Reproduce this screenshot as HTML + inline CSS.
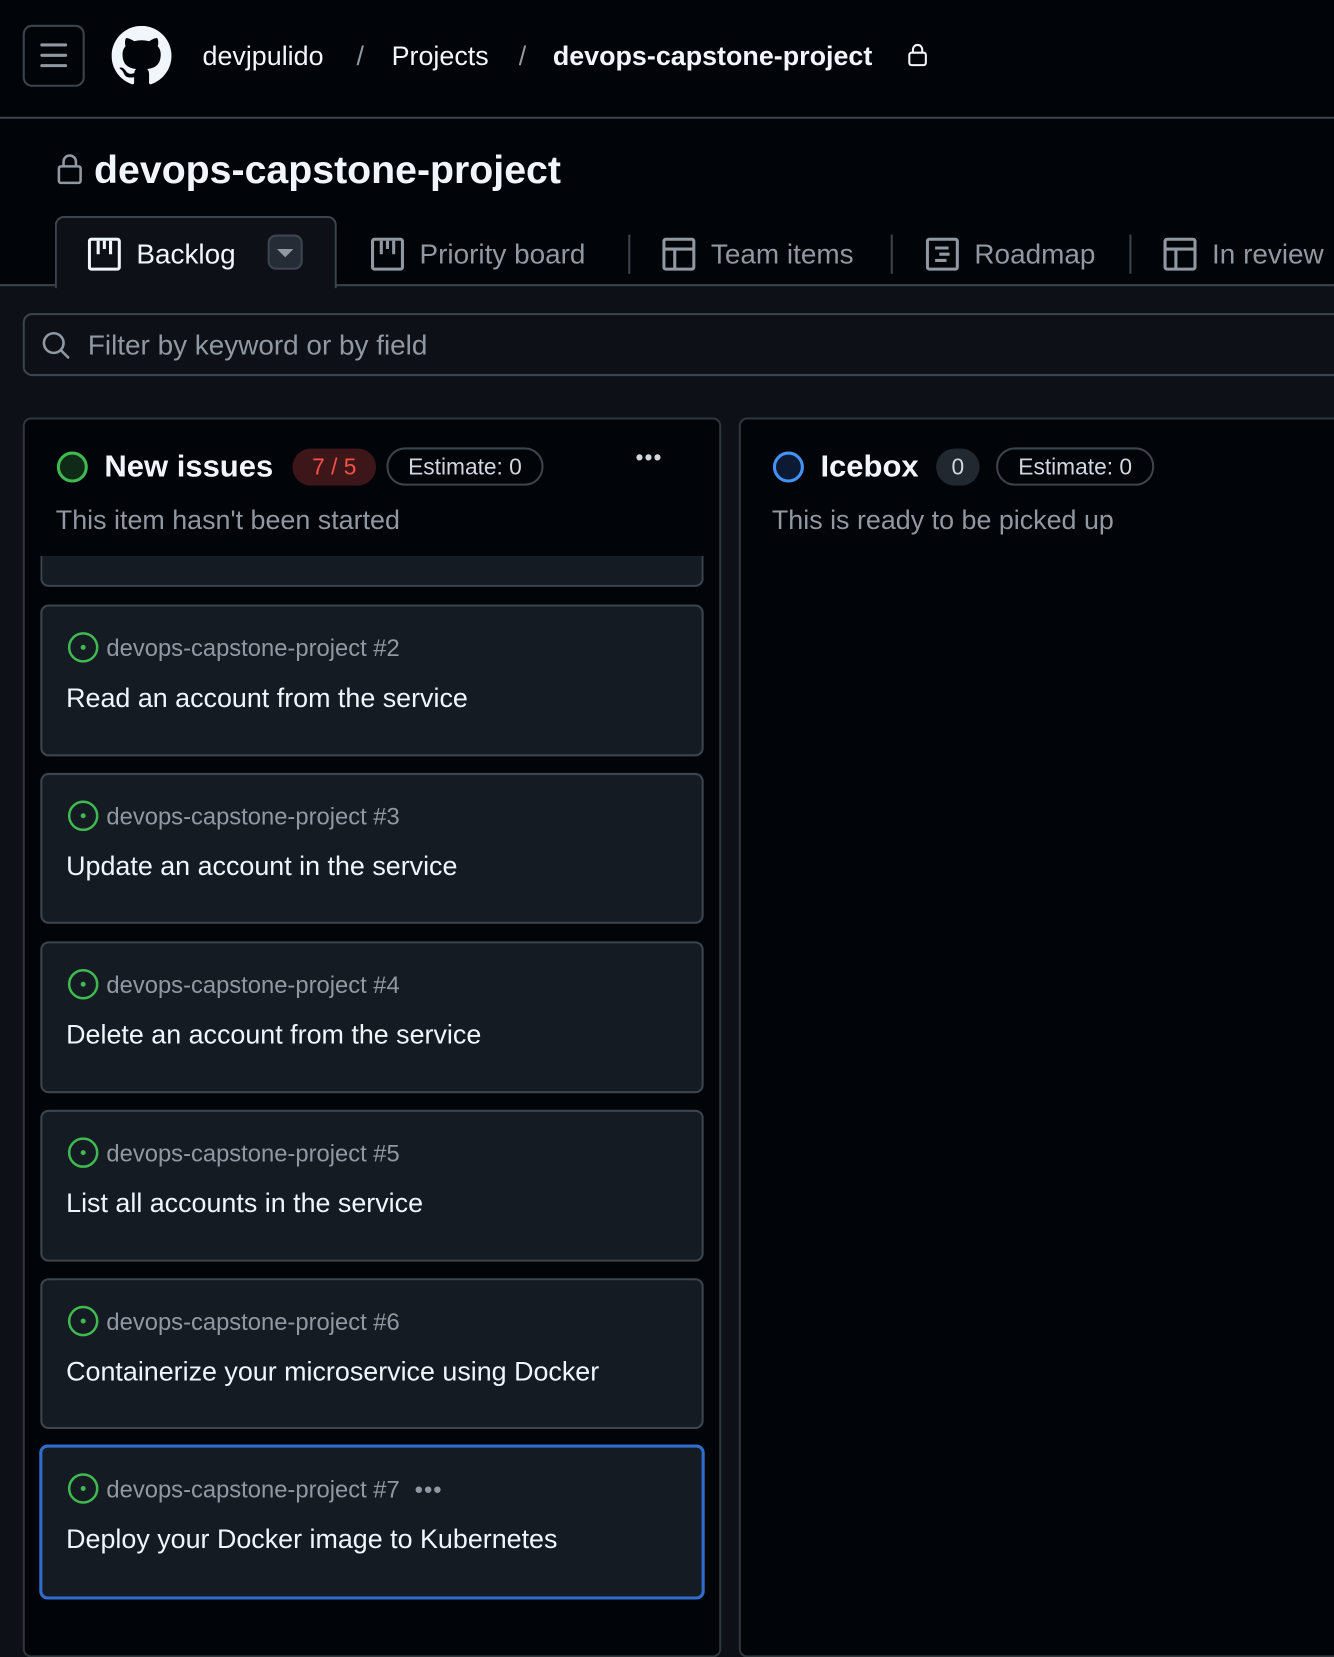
<!DOCTYPE html>
<html><head><meta charset="utf-8"><style>
html,body{margin:0;padding:0;width:1334px;height:1620px;overflow:hidden;background:#0d1117;}
#w{position:absolute;left:0;top:0;width:1291px;height:1568px;transform:scale(1.0333);transform-origin:0 0;font-family:"Liberation Sans",Arial,sans-serif;color:#f0f6fc;}
.a{position:absolute;}
.hdr{left:0;top:0;width:1291px;height:115px;background:#010409;border-bottom:2px solid #3d444d;box-sizing:border-box;}
.top2{left:0;top:115px;width:1291px;height:162px;background:#010409;border-bottom:2px solid #3d444d;box-sizing:border-box;}
.crumb{top:38px;font-size:26px;line-height:32px;color:#f0f6fc;}
.sep{color:#9198a1;}
.tab{top:230px;font-size:27px;line-height:32px;color:#9198a1;}
.vsep{top:227px;width:2px;height:38px;background:#3d444d;}
.col{top:404px;background:#010409;border:2px solid #30363d;border-radius:8px;box-sizing:border-box;height:1200px;}
.card{left:39px;width:642px;background:#151b23;border:2px solid #3d444d;border-radius:8px;box-sizing:border-box;}
.meta{position:absolute;left:62px;top:26px;font-size:23px;color:#9198a1;line-height:28px;}
.ic{position:absolute;left:24px;top:24px;}
.ttl{position:absolute;left:23px;top:72px;font-size:26px;line-height:32px;color:#f0f6fc;}
.pill{border:2px solid #3d444d;border-radius:18px;box-sizing:border-box;height:37px;font-size:22px;line-height:33px;color:#d1d7e0;text-align:center;}
</style></head><body><div id="w">
<div class="a hdr"></div>
<div class="a top2"></div>
<div class="a" style="left:22px;top:24px;width:60px;height:60px;border:2px solid #3d444d;border-radius:9px;box-sizing:border-box;"></div>
<div class="a" style="left:39px;top:42px;width:26px;height:3px;background:#9198a1;border-radius:2px;box-shadow:0 10px 0 #9198a1,0 20px 0 #9198a1;"></div>
<svg class="a" style="left:108px;top:25px" width="58" height="58" viewBox="0 0 16 16"><path fill="#f0f6fc" d="M8 0C3.58 0 0 3.58 0 8c0 3.54 2.29 6.53 5.47 7.59.4.07.55-.17.55-.38 0-.19-.01-.82-.01-1.49-2.01.37-2.53-.49-2.69-.94-.09-.23-.48-.94-.82-1.13-.28-.15-.68-.52-.01-.53.63-.01 1.08.58 1.23.82.72 1.21 1.87.87 2.33.66.07-.52.28-.87.51-1.07-1.78-.2-3.64-.89-3.64-3.95 0-.87.31-1.59.82-2.15-.08-.2-.36-1.02.08-2.12 0 0 .67-.21 2.2.82.64-.18 1.32-.27 2-.27.68 0 1.36.09 2 .27 1.53-1.04 2.2-.82 2.2-.82.44 1.1.16 1.92.08 2.12.51.56.82 1.27.82 2.15 0 3.07-1.87 3.75-3.65 3.95.29.25.54.73.54 1.48 0 1.07-.01 1.93-.01 2.2 0 .21.15.46.55.38A8.013 8.013 0 0016 8c0-4.42-3.58-8-8-8z"/></svg>
<div class="a crumb" style="left:196px">devjpulido</div>
<div class="a crumb sep" style="left:345px">/</div>
<div class="a crumb" style="left:379px">Projects</div>
<div class="a crumb sep" style="left:502px">/</div>
<div class="a crumb" style="left:535px;font-weight:bold">devops-capstone-project</div>
<svg class="a" style="left:878px;top:41px" width="20" height="24" viewBox="0 0 20 24"><rect x="2" y="10" width="16" height="12" rx="2" fill="none" stroke="#f0f6fc" stroke-width="2"/><path d="M5.5 10V7a4.5 4.5 0 019 0v3" fill="none" stroke="#f0f6fc" stroke-width="2"/></svg>
<svg class="a" style="left:55px;top:148px" width="25" height="32" viewBox="0 0 25 32"><rect x="2" y="13" width="21" height="16" rx="2" fill="none" stroke="#9198a1" stroke-width="2.5"/><path d="M6.5 13V8.5a6 6 0 0112 0V13" fill="none" stroke="#9198a1" stroke-width="2.5"/></svg>
<div class="a" style="left:91px;top:142px;font-size:38px;line-height:46px;font-weight:bold;color:#f0f6fc;">devops-capstone-project</div>
<div class="a" style="left:53px;top:209px;width:273px;height:70px;background:#0d1117;border:2px solid #3d444d;border-bottom:none;border-radius:9px 9px 0 0;box-sizing:border-box;"></div>
<svg class="a" style="left:85px;top:230px" width="32" height="32" viewBox="0 0 32 32"><rect x="1.5" y="1.5" width="29" height="29" rx="2" fill="none" stroke="#f0f6fc" stroke-width="3"/><path d="M10 3v13M16 3v8M22 3v13" stroke="#f0f6fc" stroke-width="3"/></svg>
<div class="a tab" style="left:132px;color:#f0f6fc">Backlog</div>
<div class="a" style="left:259px;top:227px;width:34px;height:34px;background:#262c36;border:2px solid #3d444d;border-radius:8px;box-sizing:border-box;"></div>
<div class="a" style="left:268px;top:241px;width:0;height:0;border-left:8px solid transparent;border-right:8px solid transparent;border-top:8px solid #9198a1;"></div>
<svg class="a" style="left:359px;top:230px" width="32" height="32" viewBox="0 0 32 32"><rect x="1.5" y="1.5" width="29" height="29" rx="2" fill="none" stroke="#9198a1" stroke-width="3"/><path d="M10 3v13M16 3v8M22 3v13" stroke="#9198a1" stroke-width="3"/></svg>
<div class="a tab" style="left:406px">Priority board</div>
<div class="a vsep" style="left:608px"></div>
<svg class="a" style="left:641px;top:230px" width="32" height="32" viewBox="0 0 32 32"><rect x="1.5" y="1.5" width="29" height="29" rx="2" fill="none" stroke="#9198a1" stroke-width="3"/><path d="M2 11h28M12 11v19" stroke="#9198a1" stroke-width="3"/></svg>
<div class="a tab" style="left:688px">Team items</div>
<div class="a vsep" style="left:862px"></div>
<svg class="a" style="left:896px;top:230px" width="32" height="32" viewBox="0 0 32 32"><rect x="1.5" y="1.5" width="29" height="29" rx="2" fill="none" stroke="#9198a1" stroke-width="3"/><path d="M9 10h13M13 16h10M9 22h11" stroke="#9198a1" stroke-width="3"/></svg>
<div class="a tab" style="left:943px">Roadmap</div>
<div class="a vsep" style="left:1093px"></div>
<svg class="a" style="left:1126px;top:230px" width="32" height="32" viewBox="0 0 32 32"><rect x="1.5" y="1.5" width="29" height="29" rx="2" fill="none" stroke="#9198a1" stroke-width="3"/><path d="M2 11h28M12 11v19" stroke="#9198a1" stroke-width="3"/></svg>
<div class="a tab" style="left:1173px">In review</div>
<div class="a" style="left:22px;top:303px;width:1300px;height:61px;border:2px solid #3d444d;border-radius:9px;box-sizing:border-box;background:#0d1117;"></div>
<svg class="a" style="left:40px;top:320px" width="30" height="30" viewBox="0 0 30 30"><circle cx="12" cy="12" r="9.5" fill="none" stroke="#9198a1" stroke-width="2.5"/><path d="M19 19l7 7" stroke="#9198a1" stroke-width="2.5" stroke-linecap="round"/></svg>
<div class="a" style="left:85px;top:318px;font-size:27px;line-height:32px;color:#9198a1;">Filter by keyword or by field</div>
<div class="a col" style="left:22px;width:676px"></div>
<div class="a col" style="left:715px;width:700px"></div>
<div class="a" style="left:55px;top:437px;width:30px;height:30px;border:3px solid #3fb950;border-radius:50%;box-sizing:border-box;background:#0f2a17;"></div>
<div class="a" style="left:101px;top:434px;font-size:30px;line-height:36px;font-weight:bold">New issues</div>
<div class="a" style="left:283px;top:434px;width:81px;height:36px;background:#3c1618;border-radius:18px;color:#f85149;font-size:22px;line-height:36px;text-align:center;">7 / 5</div>
<div class="a pill" style="left:374px;top:433px;width:152px">Estimate: 0</div>
<div class="a" style="left:615px;top:430px;font-size:22px;color:#d1d7e0;letter-spacing:1px">•••</div>
<div class="a" style="left:54px;top:487px;font-size:26px;line-height:32px;color:#9198a1">This item hasn't been started</div>
<div class="a" style="left:748px;top:437px;width:30px;height:30px;border:3px solid #4493f8;border-radius:50%;box-sizing:border-box;background:#0c1a33;"></div>
<div class="a" style="left:794px;top:434px;font-size:30px;line-height:36px;font-weight:bold">Icebox</div>
<div class="a" style="left:906px;top:434px;width:42px;height:36px;background:#212830;border-radius:18px;color:#d1d7e0;font-size:22px;line-height:36px;text-align:center;">0</div>
<div class="a pill" style="left:964px;top:433px;width:153px">Estimate: 0</div>
<div class="a" style="left:747px;top:487px;font-size:26px;line-height:32px;color:#9198a1">This is ready to be picked up</div>
<div class="a card" style="top:538px;height:30px;border-top:none;border-radius:0 0 8px 8px"></div>
<div class="a card" style="top:585px;height:147px"><svg class="ic" width="31" height="31" viewBox="0 0 32 32"><circle cx="16" cy="16" r="14" fill="none" stroke="#3fb950" stroke-width="2.5"/><circle cx="16" cy="16" r="2.5" fill="#3fb950"/></svg><div class="meta">devops-capstone-project #2</div><div class="ttl">Read an account from the service</div></div>
<div class="a card" style="top:748px;height:146px"><svg class="ic" width="31" height="31" viewBox="0 0 32 32"><circle cx="16" cy="16" r="14" fill="none" stroke="#3fb950" stroke-width="2.5"/><circle cx="16" cy="16" r="2.5" fill="#3fb950"/></svg><div class="meta">devops-capstone-project #3</div><div class="ttl">Update an account in the service</div></div>
<div class="a card" style="top:911px;height:147px"><svg class="ic" width="31" height="31" viewBox="0 0 32 32"><circle cx="16" cy="16" r="14" fill="none" stroke="#3fb950" stroke-width="2.5"/><circle cx="16" cy="16" r="2.5" fill="#3fb950"/></svg><div class="meta">devops-capstone-project #4</div><div class="ttl">Delete an account from the service</div></div>
<div class="a card" style="top:1074px;height:147px"><svg class="ic" width="31" height="31" viewBox="0 0 32 32"><circle cx="16" cy="16" r="14" fill="none" stroke="#3fb950" stroke-width="2.5"/><circle cx="16" cy="16" r="2.5" fill="#3fb950"/></svg><div class="meta">devops-capstone-project #5</div><div class="ttl">List all accounts in the service</div></div>
<div class="a card" style="top:1237px;height:146px"><svg class="ic" width="31" height="31" viewBox="0 0 32 32"><circle cx="16" cy="16" r="14" fill="none" stroke="#3fb950" stroke-width="2.5"/><circle cx="16" cy="16" r="2.5" fill="#3fb950"/></svg><div class="meta">devops-capstone-project #6</div><div class="ttl">Containerize your microservice using Docker</div></div>
<div class="a card" style="left:38px;width:644px;top:1398px;height:150px;border:3px solid #316dca;"><svg class="ic" width="31" height="31" viewBox="0 0 32 32"><circle cx="16" cy="16" r="14" fill="none" stroke="#3fb950" stroke-width="2.5"/><circle cx="16" cy="16" r="2.5" fill="#3fb950"/></svg><div class="meta">devops-capstone-project #7 <span style="letter-spacing:1px;margin-left:8px">•••</span></div><div class="ttl">Deploy your Docker image to Kubernetes</div></div>
</div></body></html>
